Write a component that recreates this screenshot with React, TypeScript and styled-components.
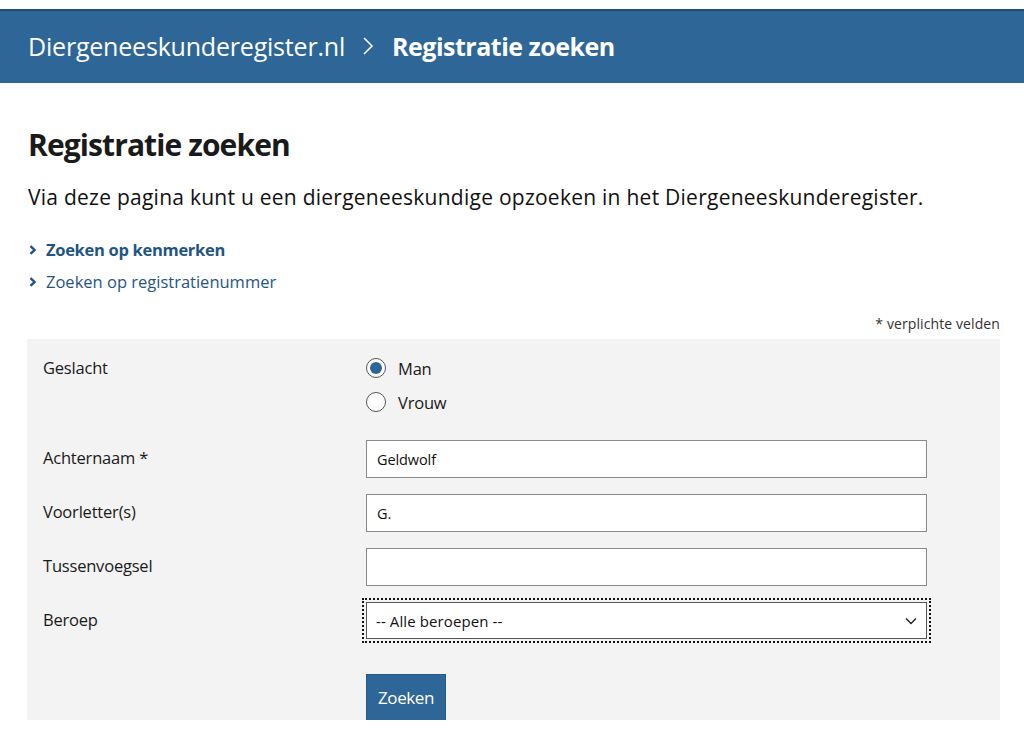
import React from "react";
import styled, { createGlobalStyle } from "styled-components";

const Global = createGlobalStyle`
  html, body { margin: 0; padding: 0; background: #fff; }
  body { font-family: "Open Sans", "Noto Sans", sans-serif; color: #1a1a1a; }
  * { box-sizing: border-box; }
`;

const Page = styled.div`
  padding-top: 9px;
`;

const Header = styled.header`
  background: #2e6797;
  border-top: 2px solid #1e4d78;
  height: 74px;
  display: flex;
  align-items: center;
  padding: 0 28px 2px;
  color: #fff;
  font-size: 25px;
  letter-spacing: -0.2px;
`;

const Crumb = styled.span<{ $bold?: boolean }>`
  font-weight: ${(p) => (p.$bold ? 700 : 400)};
  letter-spacing: ${(p) => (p.$bold ? "-0.5px" : "-0.2px")};
`;

const Sep = styled.span`
  display: inline-flex;
  margin: 0 18px 0 17px;
`;

const Main = styled.main`
  padding: 0 24px 0 27px;
`;

const Title = styled.h1`
  margin: 41px 0 0 1px;
  font-size: 30px;
  font-weight: 700;
  letter-spacing: -0.9px;
  color: #1a1a1a;
`;

const Intro = styled.p`
  margin: 18px 0 0 1px;
  font-size: 21px;
  letter-spacing: 0.25px;
  color: #111;
`;

const Links = styled.ul`
  list-style: none;
  margin: 26px 0 0 1px;
  padding: 0;
  display: flex;
  flex-direction: column;
  gap: 6px;
`;

const LinkItem = styled.li<{ $bold?: boolean }>`
  display: flex;
  align-items: center;
  gap: 8px;
  font-size: 16.5px;
  letter-spacing: ${(p) => (p.$bold ? "-0.3px" : "0px")};
  color: #1f5585;
  font-weight: ${(p) => (p.$bold ? 700 : 400)};
  line-height: 26px;
`;

const Required = styled.div`
  text-align: right;
  font-size: 14px;
  color: #333;
  margin-top: 19px;
  letter-spacing: 0.1px;
`;

const Panel = styled.form`
  margin-top: 6px;
  background: #f3f3f3;
  padding: 17px 0 0 16px;
  height: 381px;
  overflow: hidden;
  display: grid;
  grid-template-columns: 323px 561px;
  row-gap: 16px;
  align-content: start;
`;

const Label = styled.div<{ $top?: number }>`
  font-size: 16.5px;
  letter-spacing: -0.2px;
  color: #1a1a1a;
  padding-top: ${(p) => p.$top ?? 6}px;
`;

const Radios = styled.div`
  display: flex;
  flex-direction: column;
  gap: 10px;
  margin-bottom: 10px;
`;

const RadioRow = styled.label`
  display: flex;
  align-items: center;
  gap: 12px;
  font-size: 16.5px;
  letter-spacing: -0.2px;
  height: 24px;
`;

const RadioCircle = styled.span<{ $checked?: boolean }>`
  width: 20px;
  height: 20px;
  border-radius: 50%;
  border: 1px solid #555;
  background: #fff;
  display: inline-flex;
  align-items: center;
  justify-content: center;
  &::after {
    content: "";
    width: 12px;
    height: 12px;
    border-radius: 50%;
    background: ${(p) => (p.$checked ? "#2e6797" : "transparent")};
  }
`;

const TextInput = styled.input`
  width: 561px;
  height: 38px;
  border: 1px solid #8a8a8a;
  background: #fff;
  padding: 0 10px;
  font-family: "Open Sans", sans-serif;
  font-size: 14.5px;
  letter-spacing: -0.1px;
  color: #111;
  outline: none;
`;

const SelectWrap = styled.div`
  width: 569px;
  margin-left: -4px;
  margin-top: -4px;
  border: 2px dotted #111;
  padding: 2px;
`;

const SelectBox = styled.div`
  height: 37px;
  background: #fff;
  border: 1px solid #555;
  display: flex;
  align-items: center;
  justify-content: space-between;
  padding: 0 8px 0 9px;
  font-size: 15px;
  letter-spacing: 0.1px;
  color: #111;
`;

const Spacer = styled.div``;

const Button = styled.button`
  margin-top: 15px;
  width: 80px;
  height: 50px;
  background: #2e6797;
  border: 1px solid #245a88;
  color: #fff;
  font-family: "Open Sans", sans-serif;
  font-size: 17px;
  letter-spacing: -0.4px;
  padding: 0 0 4px;
  justify-self: start;
`;

const Chevron = ({ size = 10, stroke = 2.4 }: { size?: number; stroke?: number }) => (
  <svg width={size} height={size} viewBox="0 0 10 10">
    <path d="M2.5 1.2 L6.5 5 L2.5 8.8" fill="none" stroke="currentColor" strokeWidth={stroke} />
  </svg>
);

export default function App() {
  return (
    <>
      <Global />
      <Page>
        <Header>
          <Crumb>Diergeneeskunderegister.nl</Crumb>
          <Sep>
            <svg width="12" height="20" viewBox="0 0 12 20">
              <path d="M2 2 L10 10 L2 18" fill="none" stroke="#fff" strokeWidth="1.6" />
            </svg>
          </Sep>
          <Crumb $bold>Registratie zoeken</Crumb>
        </Header>
        <Main>
          <Title>Registratie zoeken</Title>
          <Intro>Via deze pagina kunt u een diergeneeskundige opzoeken in het Diergeneeskunderegister.</Intro>
          <Links>
            <LinkItem $bold>
              <Chevron />
              Zoeken op kenmerken
            </LinkItem>
            <LinkItem>
              <Chevron />
              Zoeken op registratienummer
            </LinkItem>
          </Links>
          <Required>* verplichte velden</Required>
          <Panel>
            <Label $top={0}>Geslacht</Label>
            <Radios>
              <RadioRow>
                <RadioCircle $checked />
                Man
              </RadioRow>
              <RadioRow>
                <RadioCircle />
                Vrouw
              </RadioRow>
            </Radios>
            <Label>Achternaam *</Label>
            <TextInput defaultValue="Geldwolf" />
            <Label>Voorletter(s)</Label>
            <TextInput defaultValue="G." />
            <Label>Tussenvoegsel</Label>
            <TextInput defaultValue="" />
            <Label>Beroep</Label>
            <SelectWrap>
              <SelectBox>
                <span>-- Alle beroepen --</span>
                <svg width="14" height="10" viewBox="0 0 14 10">
                  <path d="M2 2.5 L7 7.5 L12 2.5" fill="none" stroke="#222" strokeWidth="1.4" />
                </svg>
              </SelectBox>
            </SelectWrap>
            <Spacer />
            <Button type="button">Zoeken</Button>
          </Panel>
        </Main>
      </Page>
    </>
  );
}
